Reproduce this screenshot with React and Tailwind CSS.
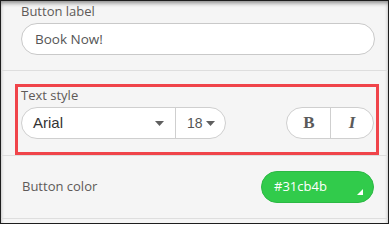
import React from "react";

function Caret({ className = "" }) {
  return (
    <svg width="9" height="5" viewBox="0 0 9 5" className={className}>
      <path d="M0 0 L9 0 L4.5 5 Z" fill="#5f5f5f" />
    </svg>
  );
}

export default function App() {
  return (
    <div
      className="relative w-[389px] h-[224px] overflow-hidden border border-[#1e1e1e] bg-[#f5f5f5] shadow-[inset_0_3px_4px_-1px_rgba(0,0,0,0.45)] text-[#5e5a58]"
      style={{ fontFamily: '"Open Sans", "Noto Sans", sans-serif' }}
    >
      {/* Button label */}
      <div className="h-[70px] border-b border-[#dedede] pl-[20px] pr-[13px] pt-[1px]">
        <div className="h-[18px] leading-[18px] text-[13px]">Button label</div>
        <div className="mt-[3px] flex h-[32px] items-center rounded-full border border-[#c9c9c9] bg-white px-[13px] text-[13.5px] text-[#555]">
          Book Now!
        </div>
      </div>

      {/* Text style */}
      <div className="h-[85px] border-b border-[#dedede] pl-[14px] pr-[9px] pt-[13px]">
        <div className="h-[71px] border-[3px] border-[#f0444a] pl-[3px] pr-[2px]">
          <div className="h-[16px] leading-[16px] text-[13px]">Text style</div>
          <div className="mt-[4px] flex items-center justify-between">
            <div
              className="flex h-[32px] w-[205px] items-stretch rounded-full border border-[#cfcfcf] bg-white text-[15px] text-[#333]"
              style={{ fontFamily: '"Liberation Sans", Arial, sans-serif' }}
            >
              <div className="flex w-[154px] items-center justify-between border-r border-[#cfcfcf] pl-[11px] pr-[11px]">
                <span>Arial</span>
                <Caret />
              </div>
              <div className="flex flex-1 items-center gap-[3px] pl-[11px] text-[14px] text-[#555]">
                <span>18</span>
                <Caret />
              </div>
            </div>
            <div
              className="flex h-[32px] w-[88px] items-stretch rounded-full border border-[#cfcfcf] bg-white text-[17px] text-[#5a5a5a]"
              style={{ fontFamily: '"Liberation Serif", "Times New Roman", serif' }}
            >
              <div className="flex w-[44px] items-center justify-center border-r border-[#cfcfcf] pl-[1px] font-bold">
                B
              </div>
              <div className="flex flex-1 items-center justify-center font-bold italic">I</div>
            </div>
          </div>
        </div>
      </div>

      {/* Button color */}
      <div className="flex h-[63px] items-center justify-between border-b border-[#dedede] pl-[21px] pr-[14px]">
        <span className="text-[13px]">Button color</span>
        <div className="relative flex h-[32px] w-[113px] items-center rounded-full border border-[#2cb944] bg-[#31cb4b] pl-[12px] text-[13px] text-white">
          #31cb4b
          <svg
            width="6"
            height="6"
            viewBox="0 0 6 6"
            className="absolute right-[10px] bottom-[7px]"
          >
            <path d="M6 0 L6 6 L0 6 Z" fill="#ffffff" />
          </svg>
        </div>
      </div>
    </div>
  );
}
